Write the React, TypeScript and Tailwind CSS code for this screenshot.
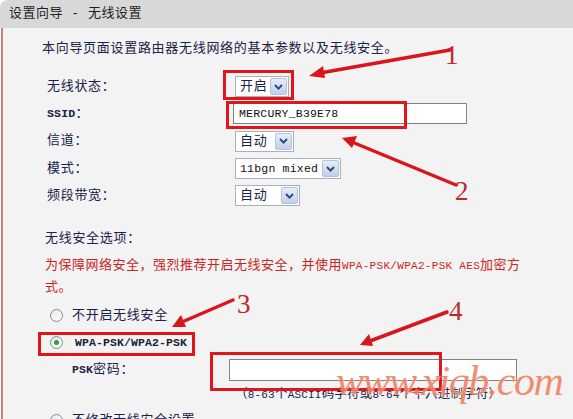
import React from "react";

const Chevron = () => (
  <svg width="9" height="6" viewBox="0 0 9 6">
    <path d="M1 1 L4.5 4.6 L8 1" fill="none" stroke="#27457a" strokeWidth="1.8" />
  </svg>
);

function Select({ className, children }: { className: string; children: React.ReactNode }) {
  return (
    <div className={`h-[21px] bg-white border border-[#a9b0b8] flex items-center pl-[4px] pr-[1px] ${className}`}>
      <span className="leading-none">{children}</span>
      <div className="ml-auto w-[17px] h-[17px] rounded-[2px] border border-[#b3c3dc] bg-gradient-to-b from-[#e6eef9] to-[#bfd0ea] flex items-center justify-center">
        <Chevron />
      </div>
    </div>
  );
}

function Radio({ checked }: { checked?: boolean }) {
  return (
    <div className="w-[13px] h-[13px] rounded-full border border-[#7f8c98] bg-gradient-to-br from-[#e4e8ec] to-white flex items-center justify-center shrink-0">
      {checked ? <div className="w-[5px] h-[5px] rounded-full bg-[#33a033]" /> : null}
    </div>
  );
}

const Row = ({ label, children }: { label: React.ReactNode; children: React.ReactNode }) => (
  <div className="grid grid-cols-[188px_1fr] items-center h-[27.3px]">
    <div>{label}</div>
    <div className="flex items-center">{children}</div>
  </div>
);

export default function App() {
  return (
    <div className="relative w-[573px] h-[419px] overflow-hidden bg-white font-['Liberation_Mono','Noto_Sans_CJK_SC',monospace] text-[13px] tracking-[0.7px] text-[#18224a]">
      <div className="flex flex-col h-full">
        <div className="h-[28px] shrink-0 bg-[#d8d8d8] rounded-tl-[8px] flex items-center pl-[9px] text-[#1e1e1e] text-[13px] tracking-[0.5px]">
          设置向导 - 无线设置
        </div>
        <div className="flex-1 bg-[#f3f3f3] ml-[1px] border-l-[2px] border-[#c98282]">
          <div className="ml-[39px] mt-[11px] h-[20px] leading-[20px]">
            本向导页面设置路由器无线网络的基本参数以及无线安全。
          </div>
          <div className="ml-[44px] mt-[14px] flex flex-col">
            <Row label="无线状态：">
              <Select className="w-[54px]">开启</Select>
            </Row>
            <Row label={<span><span className="text-[11.5px] tracking-[0.2px] font-bold">SSID</span>：</span>}>
              <div className="-ml-[2px] w-[234px] h-[21px] bg-white border border-[#7b8485] flex items-center pl-[5px] text-[11.5px] tracking-[0.2px] text-[#111]">
                MERCURY_B39E78
              </div>
            </Row>
            <Row label="信道：">
              <Select className="w-[59px]">自动</Select>
            </Row>
            <Row label="模式：">
              <Select className="w-[106px]">
                <span className="text-[11.5px] tracking-[0.2px] text-[#111]">11bgn mixed</span>
              </Select>
            </Row>
            <Row label="频段带宽：">
              <Select className="w-[65px]">自动</Select>
            </Row>
          </div>
          <div className="ml-[42px] mt-[20px] h-[20px] leading-[20px]">无线安全选项：</div>
          <div className="ml-[42px] mt-[6px] leading-[22px] text-[#cc2424] tracking-[0.5px]">
            为保障网络安全，强烈推荐开启无线安全，并使用<span className="text-[11px] tracking-[0.3px]">WPA-PSK/WPA2-PSK AES</span>加密方
            <br />
            式。
          </div>
          <div className="ml-[47px] mt-[3px] flex flex-col">
            <div className="h-[27px] flex items-center gap-[9px]">
              <Radio />
              <span>不开启无线安全</span>
            </div>
            <div className="h-[27px] flex items-center gap-[12px]">
              <Radio checked />
              <span className="text-[11.5px] tracking-[0.1px] font-bold text-[#1a1f3a]">WPA-PSK/WPA2-PSK</span>
            </div>
            <div className="h-[27px] grid grid-cols-[157px_1fr] items-center ml-[22px]">
              <span>
                <span className="text-[11.5px] tracking-[0.1px] font-bold">PSK</span>密码：
              </span>
              <div className="w-[288px] h-[22px] bg-white border border-[#7b8485]" />
            </div>
            <div className="h-[24px] flex items-center ml-[185px] text-[12.5px] tracking-[0.2px]">
              （<span className="text-[11px]">8-63</span>个<span className="text-[11px]">ASCII</span>码字符或<span className="text-[11px]">8-64</span>个十六进制字符）
            </div>
            <div className="h-[27px] flex items-center gap-[9px]">
              <Radio />
              <span>不修改无线安全设置</span>
            </div>
          </div>
        </div>
      </div>

      {/* red annotation boxes */}
      <div className="absolute left-[223px] top-[70px] w-[71px] h-[30px] border-[3px] border-[#e0161c]" />
      <div className="absolute left-[226px] top-[101px] w-[181px] h-[28px] border-[3px] border-[#e0161c]" />
      <div className="absolute left-[38px] top-[332px] w-[157px] h-[24px] border-[3px] border-[#e0161c]" />
      <div className="absolute left-[210px] top-[352px] w-[232px] h-[39px] border-[3px] border-[#e0161c]" />

      {/* arrows */}
      <svg className="absolute inset-0" width="573" height="419" viewBox="0 0 573 419">
        <g stroke="#d8161b" strokeWidth="3.5" strokeLinecap="round" fill="#d8161b">
          <line x1="450" y1="50" x2="320" y2="73" />
          <polygon points="309,76 323,66 325,78" stroke="none" />
          <line x1="456" y1="185" x2="352" y2="142" />
          <polygon points="342,138 357,136 352,148" stroke="none" />
          <line x1="233" y1="300" x2="182" y2="322" />
          <polygon points="172,327 181,315 186,327" stroke="none" />
          <line x1="447" y1="312" x2="370" y2="341" />
          <polygon points="360,345 369,334 373,346" stroke="none" />
        </g>
      </svg>

      {/* numbers */}
      <span className="absolute left-[445px] top-[42px] font-['Liberation_Serif',serif] text-[27px] leading-none text-[#c0282a]">1</span>
      <span className="absolute left-[455px] top-[178px] font-['Liberation_Serif',serif] text-[27px] leading-none text-[#c0282a]">2</span>
      <span className="absolute left-[237px] top-[291px] font-['Liberation_Serif',serif] text-[27px] leading-none text-[#c0282a]">3</span>
      <span className="absolute left-[449px] top-[298px] font-['Liberation_Serif',serif] text-[27px] leading-none text-[#c0282a]">4</span>

      {/* watermark */}
      <span className="absolute left-[336px] top-[360px] font-['Liberation_Serif',serif] italic text-[42px] leading-none tracking-[-1.5px] text-[#f08262] opacity-90 [text-shadow:0_0_2px_#fff]">
        www.xiqb.com
      </span>
    </div>
  );
}
